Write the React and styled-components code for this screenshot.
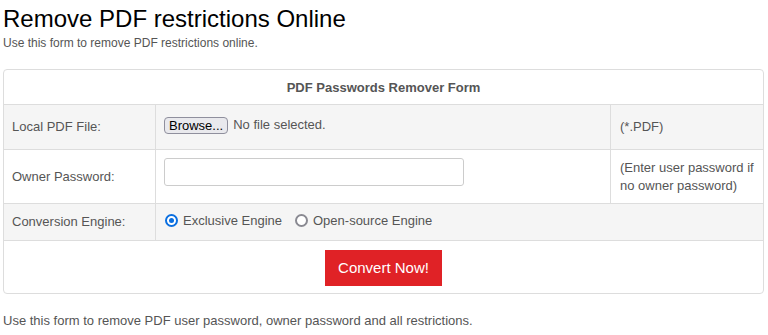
import React from 'react'
import styled, { createGlobalStyle } from 'styled-components'

const GlobalStyle = createGlobalStyle`
  html, body {
    margin: 0;
    padding: 0;
    background: #fff;
  }
  body {
    font-family: "Liberation Sans", Arial, sans-serif;
    color: #555;
  }
`

const Page = styled.div`
  width: 761px;
  padding: 5px 0 0 3px;
`

const Title = styled.h1`
  margin: 0;
  font-size: 24px;
  line-height: 27px;
  font-weight: 400;
  color: #000;
`

const Lead = styled.p`
  margin: 3px 0 0;
  font-size: 12px;
  line-height: 17px;
  color: #555;
`

const Panel = styled.div`
  margin-top: 17px;
  border: 1px solid #ddd;
  border-radius: 4px;
  overflow: hidden;
`

const Head = styled.div`
  height: 34px;
  display: flex;
  align-items: center;
  justify-content: center;
  font-size: 13px;
  font-weight: 700;
  color: #555;
`

const Row = styled.div`
  display: grid;
  grid-template-columns: 151px 455px 1fr;
  height: ${p => p.$h}px;
  border-top: 1px solid #ddd;
  background: ${p => (p.$shade ? '#f5f5f5' : '#fff')};
`

const Cell = styled.div`
  display: flex;
  align-items: ${p => (p.$top ? 'flex-start' : 'center')};
  padding: ${p => (p.$top ? '8px 8px 0' : '0 8px')};
  grid-column: ${p => (p.$span ? 'span 2' : 'auto')};
  font-size: 13px;
  line-height: 18px;
  color: #555;
  & + & {
    border-left: 1px solid #ddd;
  }
`

const Note = styled(Cell)`
  padding-left: 9px;
`

const BrowseButton = styled.button`
  height: 17px;
  margin: -4px 0 0;
  padding: 0 4px;
  font-family: inherit;
  font-size: 13px;
  line-height: 15px;
  color: #000;
  background: #e9e9ed;
  border: 1px solid #8f8f9d;
  border-radius: 4px;
`

const FileName = styled.span`
  margin: -4px 0 0 5px;
`

const TextInput = styled.input`
  box-sizing: border-box;
  width: 300px;
  height: 28px;
  margin: 0;
  border: 1px solid #ccc;
  border-radius: 3px;
  background: #fff;
`

const Radio = styled.label`
  display: flex;
  align-items: center;
  margin-right: 12px;
  margin-top: -3px;
  span {
    margin-left: 5px;
  }
`

const Dot = styled.span`
  box-sizing: border-box;
  width: 13px;
  height: 13px;
  margin-left: 1px !important;
  border-radius: 50%;
  border: 2px solid ${p => (p.$on ? '#0b6fe0' : '#8a8a92')};
  background: #fff;
  display: flex;
  align-items: center;
  justify-content: center;
  &::after {
    content: '';
    display: ${p => (p.$on ? 'block' : 'none')};
    width: 5px;
    height: 5px;
    border-radius: 50%;
    background: #0b6fe0;
  }
`

const Actions = styled.div`
  height: 52px;
  border-top: 1px solid #ddd;
  display: flex;
  align-items: center;
  justify-content: center;
`

const ConvertButton = styled.button`
  width: 117px;
  height: 36px;
  margin-top: 1px;
  border: none;
  background: #e02226;
  color: #fff;
  font-family: inherit;
  font-size: 15px;
  cursor: pointer;
`

const Footer = styled.p`
  margin: 18px 0 0;
  font-size: 13px;
  line-height: 18px;
  color: #555;
`

function App() {
  return (
    <Page>
      <GlobalStyle />
      <Title>Remove PDF restrictions Online</Title>
      <Lead>Use this form to remove PDF restrictions online.</Lead>
      <Panel>
        <Head>PDF Passwords Remover Form</Head>
        <Row $h={44} $shade>
          <Cell>Local PDF File:</Cell>
          <Cell>
            <BrowseButton>Browse...</BrowseButton>
            <FileName>No file selected.</FileName>
          </Cell>
          <Note>(*.PDF)</Note>
        </Row>
        <Row $h={53}>
          <Cell>Owner Password:</Cell>
          <Cell $top>
            <TextInput type="password" />
          </Cell>
          <Note>
            (Enter user password if
            <br />
            no owner password)
          </Note>
        </Row>
        <Row $h={36} $shade>
          <Cell>Conversion Engine:</Cell>
          <Cell $span>
            <Radio>
              <Dot $on />
              <span>Exclusive Engine</span>
            </Radio>
            <Radio>
              <Dot />
              <span>Open-source Engine</span>
            </Radio>
          </Cell>
        </Row>
        <Actions>
          <ConvertButton>Convert Now!</ConvertButton>
        </Actions>
      </Panel>
      <Footer>Use this form to remove PDF user password, owner password and all restrictions.</Footer>
    </Page>
  )
}

export default App
